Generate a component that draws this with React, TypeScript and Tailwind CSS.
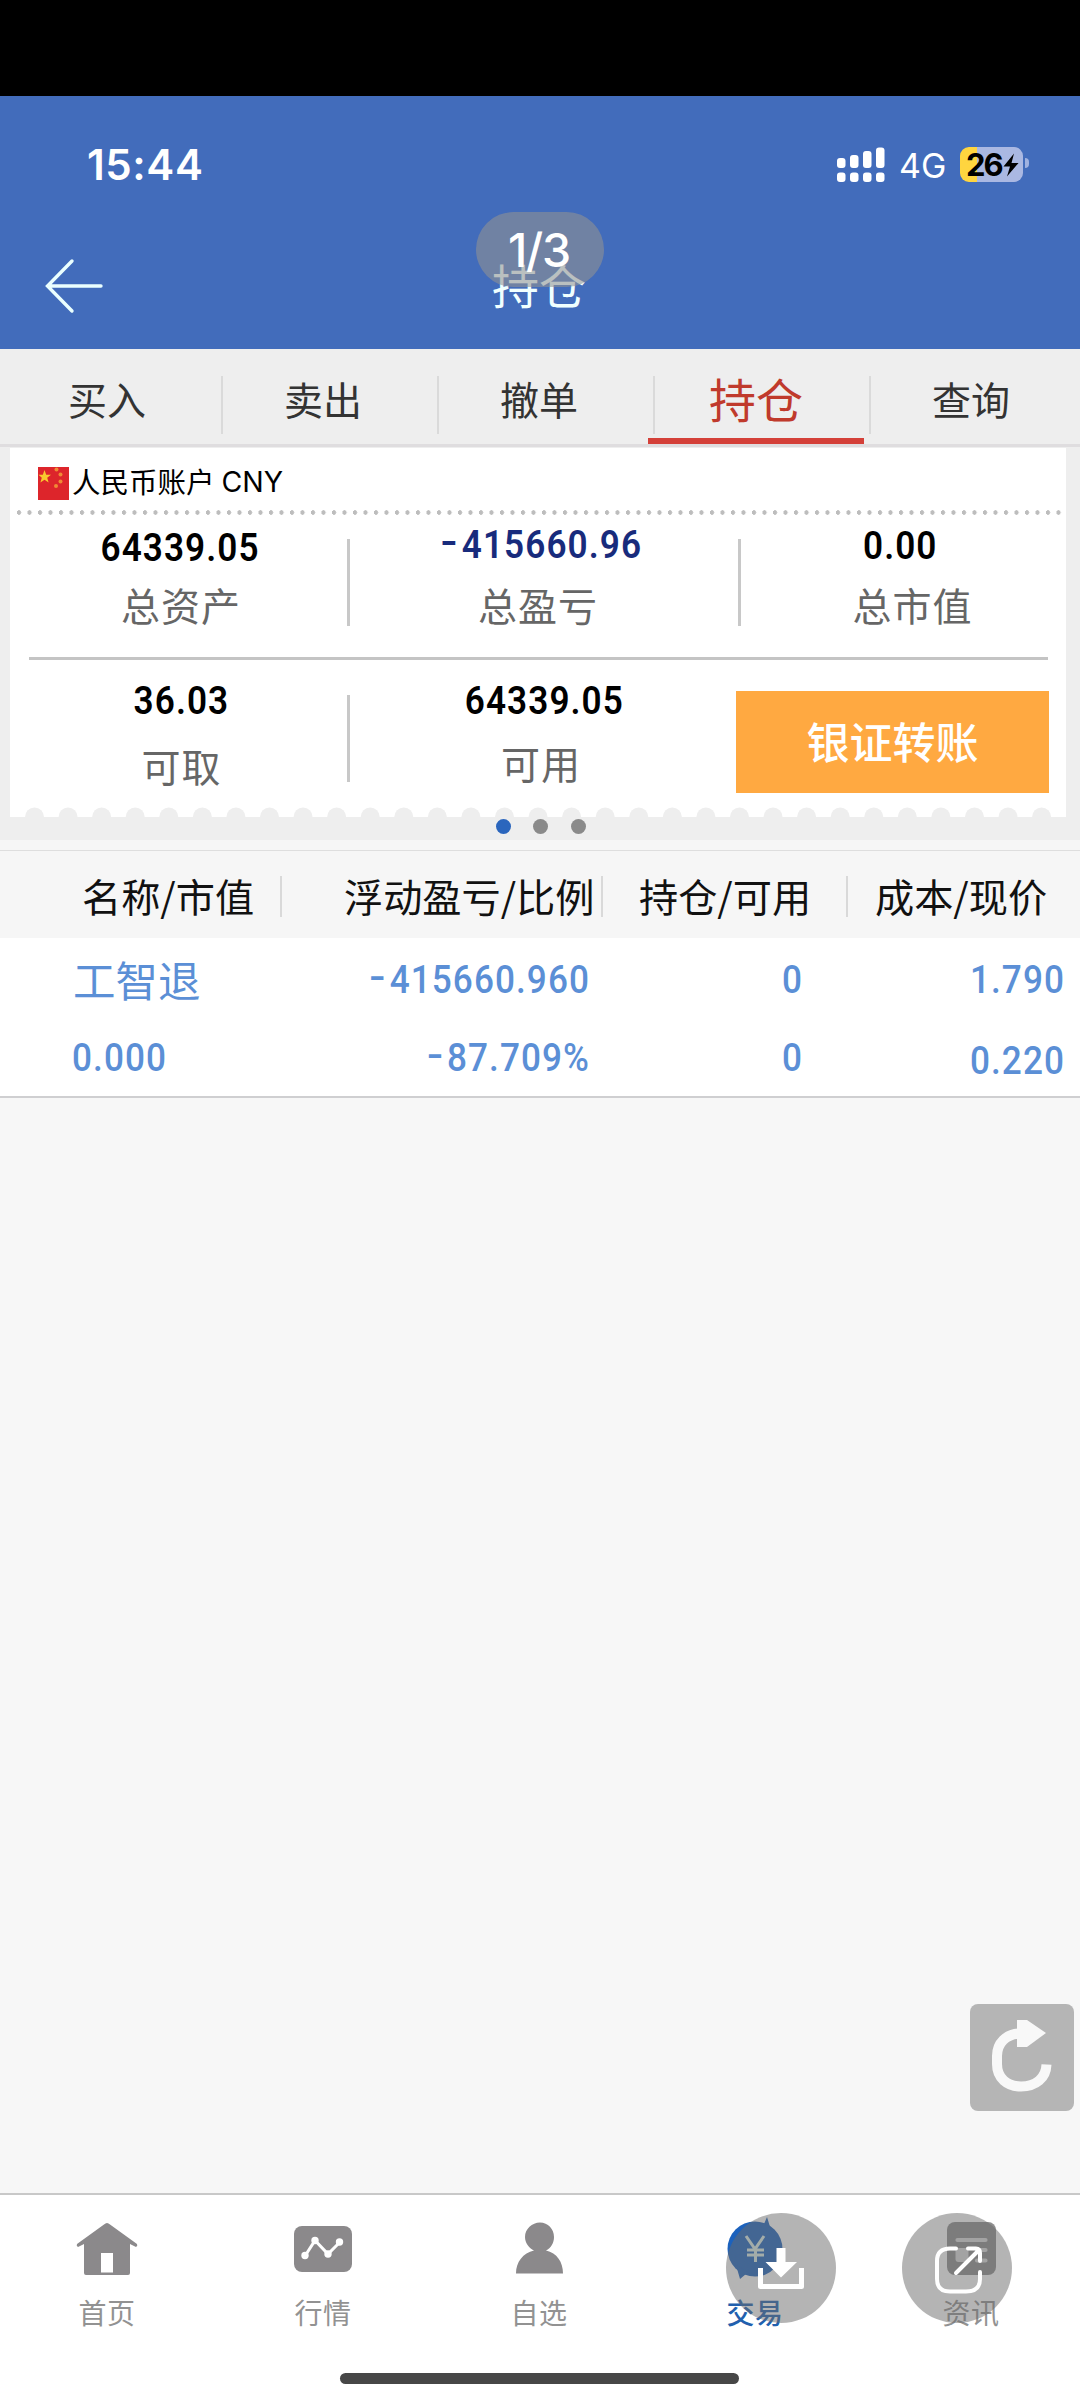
import React from "react";

const cjk = "font-['Noto_Sans_CJK_SC',sans-serif]";
const num = "font-['Roboto','Noto_Sans_CJK_SC',sans-serif]";

function StatusBar() {
  return (
    <div className="flex h-[136px] items-start pt-[49px] pl-[87px] text-white">
      <div className="w-[750px] text-[42px] leading-[40px] font-semibold tracking-[0.6px] font-['Inter',sans-serif]">15:44</div>
      <svg width="48" height="36" viewBox="0 0 48 36" className="mt-[2px] fill-white">
        <rect x="0" y="11" width="8.500" height="10" rx="3" />
        <rect x="13" y="8" width="8.500" height="13" rx="3" />
        <rect x="26" y="4" width="8.500" height="17" rx="3" />
        <rect x="39" y="0.500" width="8.500" height="20.500" rx="3" />
        <rect x="0" y="25.500" width="8.500" height="9.500" rx="3" />
        <rect x="13" y="25.500" width="8.500" height="9.500" rx="3" />
        <rect x="26" y="25.500" width="8.500" height="9.500" rx="3" />
        <rect x="39" y="25.500" width="8.500" height="9.500" rx="3" />
      </svg>
      <div className="ml-[14px] w-[61px] pt-[1px] text-[34px] leading-[40px] font-['Inter',sans-serif]">4G</div>
      <div className="mt-[2px] flex h-[35px] w-[63px] items-center overflow-hidden rounded-[9px] bg-[linear-gradient(90deg,#ffd53f_27%,#aab8e2_27%)] pl-[6px] text-black">
        <span className="text-[31px] leading-none font-bold tracking-[-2px] font-['Inter',sans-serif]">26</span>
        <svg width="16" height="24" viewBox="0 0 16 24" className="ml-[1px] fill-black">
          <path d="M11 0.500 L0.500 13.500 H7 L4 23.500 L15.500 10 H8.500 Z" />
        </svg>
      </div>
      <div className="mt-[13px] ml-[2px] h-[10px] w-[4px] rounded-r-full bg-[#a0b2e0]" />
    </div>
  );
}

function Header() {
  return (
    <header className="h-[253px] bg-[#426cbb]">
      <StatusBar />
      <div className="relative flex h-[117px] items-start">
        <svg width="60" height="56" viewBox="0 0 60 56" className="mt-[26px] ml-[44px] fill-none stroke-[#eaffff]" strokeWidth="3.400" strokeLinecap="round">
          <path d="M57 28 H4 M28 3 L3.500 28 L28 53" />
        </svg>
        <h1 className={`absolute top-[28px] left-0 w-[1078px] text-center text-[47px] leading-[48px] text-[#f0ffff] ${cjk}`}>持仓</h1>
        <div className="absolute -top-[20px] left-[476px] flex h-[75px] w-[128px] justify-center rounded-full bg-[rgba(147,147,147,0.58)] pt-[14px] pr-[2px] text-[46.500px] leading-[48px] font-medium tracking-[-1.2px] text-white font-['Inter',sans-serif]">
          1/3
        </div>
      </div>
    </header>
  );
}

function Tabs() {
  const tabs = ["买入", "卖出", "撤单", "持仓", "查询"];
  return (
    <nav className={`flex h-[98px] border-b-[3px] border-[#dfdddf] bg-[#eeeeee] ${cjk}`}>
      {tabs.map((t, i) =>
        i === 3 ? (
          <div key={t} className="relative flex h-[95px] w-[216px] justify-center border-b-[6px] border-[#d44039] pt-[25px] text-[47px] leading-[48px] text-[#c03a2c]">
            {t}
            <i className="absolute top-[27px] left-[5px] h-[58px] w-[2px] bg-[#dadada]" />
          </div>
        ) : (
          <div key={t} className="relative flex h-[95px] w-[216px] justify-center pt-[25px] pr-[2px] text-[39px] leading-[48px] text-[#333]">
            {t}
            {i > 0 && <i className="absolute top-[27px] left-[5px] h-[58px] w-[2px] bg-[#dadada]" />}
          </div>
        )
      )}
    </nav>
  );
}

function Flag() {
  return (
    <svg width="31" height="33" viewBox="0 0 31 33" className="mt-[19px] ml-[28px]">
      <rect width="31" height="33" fill="#dd252b" />
      <path d="M6.500 3 L8.200 7.800 H13 L9.200 10.800 L10.600 15.600 L6.500 12.700 L2.400 15.600 L3.800 10.800 L0.500 7.800 H4.800 Z" fill="#f9c92e" />
      <g fill="#f08a35">
        <circle cx="18.500" cy="2.500" r="2" />
        <circle cx="22.500" cy="7.500" r="2" />
        <circle cx="22.500" cy="14.500" r="2" />
        <circle cx="18" cy="19" r="2" />
      </g>
    </svg>
  );
}

const numCls = "text-[39.500px] leading-[40px] font-semibold tracking-[1.2px] scale-x-[0.89]";

function Minus() {
  return <span className="mr-[3px] inline-block origin-right -translate-y-[3px] scale-x-[1.35]">-</span>;
}

function AccountCard() {
  return (
    <section className="h-[393px] bg-[#eeeeee] pt-[1px] pl-[10px]">
      <div className="relative h-[369px] w-[1056px] bg-white">
        <div className="flex h-[62px] items-start">
          <Flag />
          <span className={`mt-[13px] ml-[3px] text-[28.500px] leading-[40px] text-black ${cjk}`}>人民币账户</span>
          <span className="mt-[14px] ml-[7px] text-[28.500px] leading-[40px] text-black font-['Inter',sans-serif]">CNY</span>
        </div>
        <div className="ml-[7px] h-[5px] w-[1045px] bg-[radial-gradient(circle_at_2px_2.5px,#bdbdbd_2px,transparent_2.5px)] bg-[length:10.5px_5px]" />
        <div className="flex h-[142px]">
          <div className="flex w-[337px] flex-col items-center pr-[2px]">
            <div className={`mt-[13px] pl-[6px] text-black ${numCls} ${num}`}>64339.05</div>
            <div className={`mt-[12px] pr-[4px] pl-[11px] text-[39px] leading-[48px] tracking-[1px] text-[#666] ${cjk}`}>总资产</div>
          </div>
          <div className="mt-[24px] h-[87px] w-[3px] bg-[#c8c8c8]" />
          <div className="flex w-[388px] flex-col items-center">
            <div className={`mt-[10px] text-[#182b7c] ${numCls} ${num}`}><Minus />415660.96</div>
            <div className={`mt-[15px] pr-[12px] text-[39px] leading-[48px] tracking-[1px] text-[#666] ${cjk}`}>总盈亏</div>
          </div>
          <div className="mt-[24px] h-[87px] w-[3px] bg-[#c8c8c8]" />
          <div className="flex w-[325px] flex-col items-center">
            <div className={`mt-[11px] pr-[7px] text-black ${numCls} ${num}`}>0.00</div>
            <div className={`mt-[14px] pl-[18px] text-[39px] leading-[48px] tracking-[1px] text-[#666] ${cjk}`}>总市值</div>
          </div>
        </div>
        <div className="ml-[19px] h-[3px] w-[1019px] bg-[#c4c4c4]" />
        <div className="flex h-[140px]">
          <div className="flex w-[337px] flex-col items-center">
            <div className={`mt-[21px] pl-[6px] text-black ${numCls} ${num}`}>36.03</div>
            <div className={`mt-[20px] pl-[6px] text-[39px] leading-[48px] tracking-[1px] text-[#666] ${cjk}`}>可取</div>
          </div>
          <div className="mt-[35px] h-[87px] w-[3px] bg-[#c8c8c8]" />
          <div className="flex w-[388px] flex-col items-center">
            <div className={`mt-[21px] pl-[1px] text-black ${numCls} ${num}`}>64339.05</div>
            <div className={`mt-[17px] pr-[6px] text-[39px] leading-[48px] tracking-[1px] text-[#666] ${cjk}`}>可用</div>
          </div>
          <button className={`mt-[31px] -ml-[2px] h-[102px] w-[313px] bg-[#ffa941] pb-[4px] text-[43px] leading-[48px] font-medium text-white ${cjk}`}>银证转账</button>
        </div>
        <svg width="1056" height="10" viewBox="0 0 1056 10" className="absolute bottom-0 left-0 fill-[#eeeeee]">
          {Array.from({ length: 31 }, (_, i) => (
            <circle key={i} cx={24.5 + i * 33.57} cy="10" r="9.500" />
          ))}
        </svg>
      </div>
      <div className="flex items-center gap-[22.500px] pt-[2px] pl-[485.500px]">
        <i className="h-[15px] w-[15px] rounded-full bg-[#2b66bd]" />
        <i className="h-[15px] w-[15px] rounded-full bg-[#8a8a8a]" />
        <i className="h-[15px] w-[15px] rounded-full bg-[#8a8a8a]" />
      </div>
    </section>
  );
}

function Holdings() {
  const sep = "mt-[25px] h-[41px] w-[2px] bg-[#d9d9d9]";
  const cell = "origin-right scale-x-[0.89] text-right";
  return (
    <section>
      <div className="h-[98px] bg-[#f6f6f6] pt-[10px]">
        <div className={`flex h-[88px] border-t border-[#dedede] text-[39.200px] leading-[48px] whitespace-nowrap text-[#111] ${cjk}`}>
          <div className="w-[280px] pt-[20px] pl-[82px]">名称/市值</div>
          <i className={sep} />
          <div className="w-[319px] pt-[20px] pl-[62px]">浮动盈亏/比例</div>
          <i className={sep} />
          <div className="w-[243px] pt-[20px] pl-[36px]">持仓/可用</div>
          <i className={sep} />
          <div className="pt-[20px] pl-[27px]">成本/现价</div>
        </div>
      </div>
      <div className={`h-[160px] border-b-2 border-[#cfcfd1] bg-white text-[39.500px] leading-[40px] font-medium tracking-[1.2px] text-[#5b8fd6] ${num}`}>
        <div className="flex h-[80px] pt-[22px]">
          <div className={`-mt-[5px] w-[290px] pl-[73px] text-[42.500px] leading-[48px] font-normal tracking-normal ${cjk}`}>工智退</div>
          <div className={`w-[300px] ${cell}`}><Minus />415660.960</div>
          <div className={`w-[213px] ${cell}`}>0</div>
          <div className={`w-[262px] ${cell}`}>1.790</div>
        </div>
        <div className="flex h-[78px] pt-[20px]">
          <div className="ml-[72px] w-[218px] origin-left scale-x-[0.89]">0.000</div>
          <div className={`w-[300px] ${cell}`}><Minus />87.709%</div>
          <div className={`w-[213px] ${cell}`}>0</div>
          <div className={`w-[262px] pt-[3px] ${cell}`}>0.220</div>
        </div>
      </div>
    </section>
  );
}

function NavItem({ label, color, children }: { label: string; color: string; children: React.ReactNode }) {
  return (
    <div className="flex w-[216px] flex-col items-center pr-[2px]">
      <svg width="72" height="72" viewBox="0 0 72 72" className="mt-[17px]">
        {children}
      </svg>
      <span className={`mt-[8px] text-[28px] leading-[40px] tracking-[0.5px] ${color} ${cjk}`}>{label}</span>
    </div>
  );
}

function BottomNav() {
  return (
    <footer className="relative h-[207px] border-t-2 border-[#c8c8c8] bg-white">
      <div className="flex">
        <NavItem label="首页" color="text-[#929292]">
          <path d="M33 12.500 Q36 9.500 39 12.500 L66 32 Q67 34 65 35 L59 32 V61 Q59 63 57 63 H15 Q13 63 13 61 V32 L7 35 Q5 34 6 32 Z" fill="#8b898b" />
          <rect x="30" y="41" width="12" height="19.500" fill="#fff" />
        </NavItem>
        <NavItem label="行情" color="text-[#929292]">
          <rect x="7" y="14" width="58" height="46" rx="8" fill="#8b898b" />
          <path d="M18 44 L28 28.500 L41 42 L53 30" fill="none" stroke="#fff" strokeWidth="3" />
          <g fill="#fff">
            <circle cx="18" cy="43.500" r="3.700" />
            <circle cx="28" cy="28.500" r="3.700" />
            <circle cx="41" cy="42" r="3.700" />
            <circle cx="52.500" cy="30" r="3.700" />
          </g>
        </NavItem>
        <NavItem label="自选" color="text-[#929292]">
          <path d="M37 10.500 C45 10.500 51 17 51 25 C51 31 48 36 43 38.500 C54 41 60 50 60 61.500 H13 C13 50 20 41 31 38.500 C26 36 22 31 22 25 C22 17 29 10.500 37 10.500 Z" fill="#8b898b" />
        </NavItem>
        <NavItem label="交易" color="text-[#2160ae] font-medium">
          <circle cx="36" cy="37" r="27.500" fill="#1c62bd" />
          <path d="M36 10 L45 12 L48 5 L52 18 L60 28 Z M17 53 L21 67 L27 62 L36 64 Z" fill="#1c62bd" />
          <path d="M27 24 L36 37 L45 24 M28 38 H45 M28 43 H45 M36.500 37 V50" fill="none" stroke="#dcefe8" strokeWidth="3" />
        </NavItem>
        <NavItem label="资讯" color="text-[#929292]">
          <rect x="12" y="10" width="49" height="53" rx="8" fill="#8f8f8f" />
          <path d="M22.500 28 H50.500 M42 38 H50.500 M42 48.500 H50.500" stroke="#dcdcdc" strokeWidth="4.200" strokeLinecap="round" />
          <rect x="20.500" y="36" width="13" height="14" rx="3" fill="#dcdcdc" />
        </NavItem>
      </div>
      <div className="absolute top-[18px] left-[726px] h-[110px] w-[110px] rounded-full bg-[rgba(105,105,105,0.5)]">
        <svg width="110" height="110" viewBox="0 0 110 110">
          <path d="M50.500 35 H59.500 V49 H71 L55 64.500 L39.500 49 H50.500 Z" fill="#fff" />
          <path d="M34.500 55 V73.500 H75.500 V55" fill="none" stroke="#fff" strokeWidth="5" strokeLinejoin="round" />
        </svg>
      </div>
      <div className="absolute top-[18px] left-[902px] h-[110px] w-[110px] rounded-full bg-[rgba(105,105,105,0.5)]">
        <svg width="110" height="110" viewBox="0 0 110 110" fill="none" stroke="#fff" strokeWidth="4" strokeLinecap="round" strokeLinejoin="round">
          <path d="M54 35.500 H48 Q35 35.500 35 48 V66 Q35 78.500 48 78.500 H64 Q78 78.500 78 66 V59" />
          <path d="M66 35.500 H74 Q78 35.500 78 40 V48 M77 37 L54 60" />
        </svg>
      </div>
      <div className="absolute top-[178px] left-[340px] h-[11px] w-[399px] rounded-full bg-[#474747]" />
    </footer>
  );
}

export default function App() {
  return (
    <div className="flex h-[2400px] w-[1080px] flex-col overflow-hidden bg-[#f7f7f7]">
      <div className="h-[96px] bg-black" />
      <Header />
      <Tabs />
      <AccountCard />
      <Holdings />
      <main className="flex flex-1 items-end justify-end pr-[6px] pb-[82px]">
        <div className="h-[107px] w-[104px] rounded-[8px] bg-[#b5b5b5]">
          <svg width="104" height="107" viewBox="0 0 104 107">
            <path d="M50 29.500 C36 30 27 39 27 52 V60 C27 74 37 82.500 51 82.500 C66 82.500 76 74 76.500 60.500" fill="none" stroke="#f8f8f8" strokeWidth="10" />
            <path d="M47 16 H57 L76 29 L57 43 H47 Z" fill="#f8f8f8" />
          </svg>
        </div>
      </main>
      <BottomNav />
    </div>
  );
}
